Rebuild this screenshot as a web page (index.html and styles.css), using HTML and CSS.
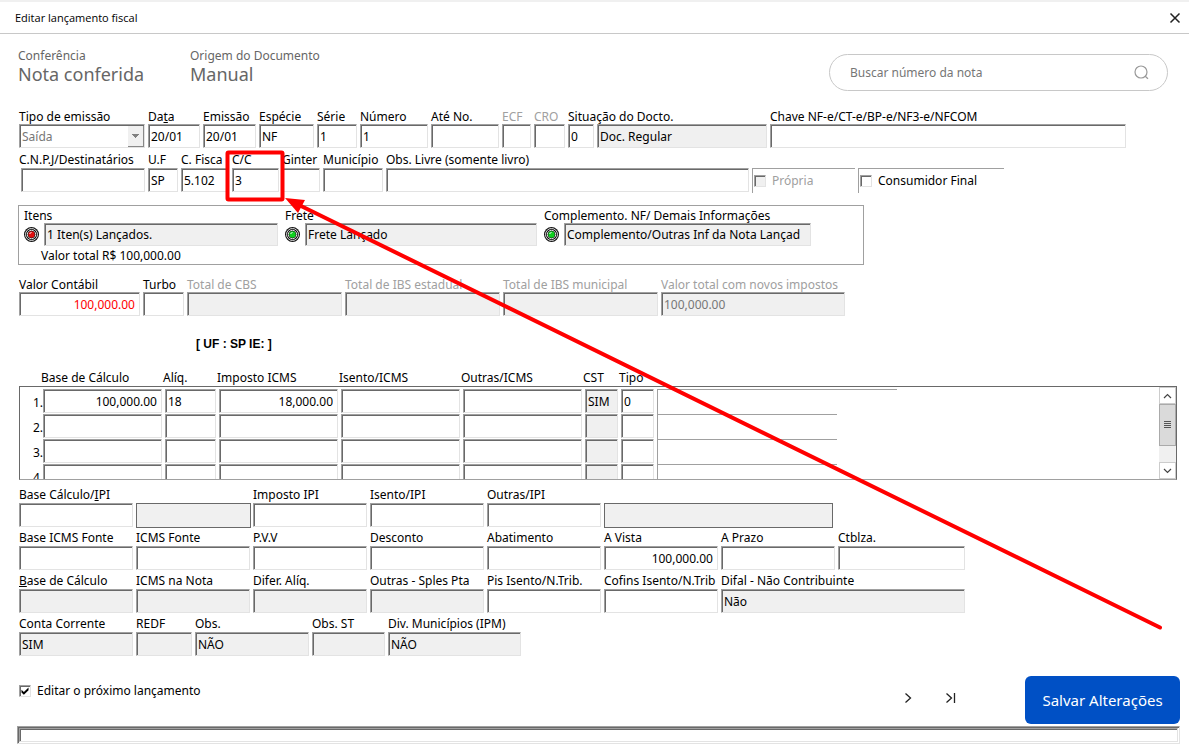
FILE: index.html
```html
<!DOCTYPE html>
<html lang="pt-BR">
<head>
  <meta charset="UTF-8">
  <meta name="viewport" content="width=device-width, initial-scale=1.0">
  <title>Editar lançamento fiscal</title>
  <link rel="stylesheet" href="styles.css">
</head>
<body>
  <header class="titlebar">
    <span class="titlebar-text">Editar lançamento fiscal</span>
    <button class="icon-button" aria-label="Fechar">
      <svg width="12" height="12" viewBox="0 0 12 12"><path d="M1.5 1.5l9 9M10.5 1.5l-9 9" fill="none" stroke="#222" stroke-width="1.5"/></svg>
    </button>
  </header>

  <main class="form">
    <section class="summary">
      <div class="summary-item conference">
        <div class="summary-label">Conferência</div>
        <div class="summary-value">Nota conferida</div>
      </div>
      <div class="summary-item">
        <div class="summary-label">Origem do Documento</div>
        <div class="summary-value">Manual</div>
      </div>
      <div class="search">
        <input type="text" placeholder="Buscar número da nota" aria-label="Buscar número da nota">
        <svg width="15" height="15" viewBox="0 0 15 15"><circle cx="7" cy="7" r="6" fill="none" stroke="#999" stroke-width="1.2"/><path d="M11.2 11.2l2.8 2.6" stroke="#999" stroke-width="1.2"/></svg>
      </div>
    </section>

    <section class="row row-document">
      <div class="field disabled">
        <label for="tipo" class="enabled-label">Tipo de emissão</label>
        <select id="tipo" disabled><option>Saída</option></select>
      </div>
      <div class="field"><label for="data">Da<u>t</u>a</label><input id="data" value="20/01"></div>
      <div class="field"><label for="emissao">Emissão</label><input id="emissao" value="20/01"></div>
      <div class="field"><label for="especie">Espécie</label><input id="especie" value="NF"></div>
      <div class="field"><label for="serie">Série</label><input id="serie" value="1"></div>
      <div class="field"><label for="numero">Número</label><input id="numero" value="1"></div>
      <div class="field"><label for="ate">Até No.</label><input id="ate"></div>
      <div class="field disabled"><label for="ecf">ECF</label><input id="ecf" disabled></div>
      <div class="field disabled"><label for="cro">CRO</label><input id="cro" disabled></div>
      <div class="field">
        <label for="situacao">Situação do Docto.</label>
        <div class="situation">
          <input id="situacao" value="0">
          <input class="readonly" value="Doc. Regular" aria-label="Descrição da situação" readonly>
        </div>
      </div>
      <div class="field"><label for="chave">Chave NF-e/CT-e/BP-e/NF3-e/NFCOM</label><input id="chave"></div>
    </section>

    <section class="row row-recipient">
      <div class="field"><label for="cnpj">C.N.P.J/Destinatários</label><input id="cnpj" class="inset"></div>
      <div class="field"><label for="uf">U.F</label><input id="uf" value="SP"></div>
      <div class="field"><label for="fiscal">C. Fisca</label><input id="fiscal" value="5.102"></div>
      <div class="field"><label for="cc">C/C</label><input id="cc" value="3"></div>
      <div class="field"><label for="ginter">Ginter</label><input id="ginter"></div>
      <div class="field"><label for="municipio">Município</label><input id="municipio"></div>
      <div class="field"><label for="obs-livre">Obs. Livre (somente livro)</label><input id="obs-livre"></div>
      <label class="check-panel disabled"><input type="checkbox" disabled> Própria</label>
      <label class="check-panel"><input type="checkbox"> Consumidor Final</label>
    </section>

    <section class="group">
      <div class="field">
        <label for="itens">Itens</label>
        <div class="led-field">
          <svg class="led led-red" viewBox="0 0 15 15"><circle class="led-rim" cx="7.5" cy="7.5" r="7.5"/><circle class="led-ring" cx="7.5" cy="7.5" r="6"/><circle class="led-ring" cx="7.5" cy="7.5" r="4.2"/><circle class="led-light" cx="7.5" cy="7.5" r="3.2"/><path d="M5.500 6.500l2-1" stroke="#fff"/></svg>
          <input id="itens" class="readonly" value="1 Iten(s) Lançados." readonly>
        </div>
      </div>
      <div class="field">
        <label for="frete">Frete</label>
        <div class="led-field">
          <svg class="led led-green" viewBox="0 0 15 15"><circle class="led-rim" cx="7.5" cy="7.5" r="7.5"/><circle class="led-ring" cx="7.5" cy="7.5" r="6"/><circle class="led-ring" cx="7.5" cy="7.5" r="4.2"/><circle class="led-light" cx="7.5" cy="7.5" r="3.2"/><path d="M5.500 6.500l2-1" stroke="#fff"/></svg>
          <input id="frete" class="readonly" value="Frete Lançado" readonly>
        </div>
      </div>
      <div class="field">
        <label for="complemento">Complemento. NF/ Demais Informações</label>
        <div class="led-field">
          <svg class="led led-green" viewBox="0 0 15 15"><circle class="led-rim" cx="7.5" cy="7.5" r="7.5"/><circle class="led-ring" cx="7.5" cy="7.5" r="6"/><circle class="led-ring" cx="7.5" cy="7.5" r="4.2"/><circle class="led-light" cx="7.5" cy="7.5" r="3.2"/><path d="M5.500 6.500l2-1" stroke="#fff"/></svg>
          <input id="complemento" class="readonly" value="Complemento/Outras Inf da Nota Lançad" readonly>
        </div>
      </div>
      <div class="group-total">Valor total R$ 100,000.00</div>
    </section>

    <section class="row row-totals">
      <div class="field"><label for="contabil">Valor Contábil</label><input id="contabil" class="number negative" value="100,000.00"></div>
      <div class="field"><label for="turbo">Turbo</label><input id="turbo"></div>
      <div class="field disabled"><label for="cbs">Total de CBS</label><input id="cbs" class="readonly" disabled></div>
      <div class="field disabled"><label for="ibs-est">Total de IBS estadual</label><input id="ibs-est" class="readonly" disabled></div>
      <div class="field disabled"><label for="ibs-mun">Total de IBS municipal</label><input id="ibs-mun" class="readonly" disabled></div>
      <div class="field disabled"><label for="novos">Valor total com novos impostos</label><input id="novos" class="readonly" value="100,000.00" disabled></div>
    </section>

    <div class="party">[ UF : SP IE: ]</div>

    <section class="taxes">
      <table class="tax-table">
        <thead>
          <tr><th></th><th>Base de Cálculo</th><th>Alíq.</th><th>Imposto ICMS</th><th>Isento/ICMS</th><th>Outras/ICMS</th><th>CST</th><th>Tipo</th></tr>
        </thead>
        <tbody>
          <tr>
            <td class="line">1.</td>
            <td><input class="number" value="100,000.00" aria-label="Base de Cálculo 1"></td>
            <td><input value="18" aria-label="Alíquota 1"></td>
            <td><input class="number" value="18,000.00" aria-label="Imposto ICMS 1"></td>
            <td><input aria-label="Isento/ICMS 1"></td>
            <td><input aria-label="Outras/ICMS 1"></td>
            <td><input class="readonly" value="SIM" aria-label="CST 1" readonly></td>
            <td><input value="0" aria-label="Tipo 1"></td>
            <td class="note note-wide"></td>
          </tr>
          <tr>
            <td class="line">2.</td>
            <td><input aria-label="Base de Cálculo 2"></td>
            <td><input aria-label="Alíquota 2"></td>
            <td><input aria-label="Imposto ICMS 2"></td>
            <td><input aria-label="Isento/ICMS 2"></td>
            <td><input aria-label="Outras/ICMS 2"></td>
            <td><input class="readonly" aria-label="CST 2" readonly></td>
            <td><input aria-label="Tipo 2"></td>
            <td class="note"></td>
          </tr>
          <tr>
            <td class="line">3.</td>
            <td><input aria-label="Base de Cálculo 3"></td>
            <td><input aria-label="Alíquota 3"></td>
            <td><input aria-label="Imposto ICMS 3"></td>
            <td><input aria-label="Isento/ICMS 3"></td>
            <td><input aria-label="Outras/ICMS 3"></td>
            <td><input class="readonly" aria-label="CST 3" readonly></td>
            <td><input aria-label="Tipo 3"></td>
            <td class="note"></td>
          </tr>
          <tr>
            <td class="line">4.</td>
            <td><input aria-label="Base de Cálculo 4"></td>
            <td><input aria-label="Alíquota 4"></td>
            <td><input aria-label="Imposto ICMS 4"></td>
            <td><input aria-label="Isento/ICMS 4"></td>
            <td><input aria-label="Outras/ICMS 4"></td>
            <td><input class="readonly" aria-label="CST 4" readonly></td>
            <td><input aria-label="Tipo 4"></td>
            <td class="note"></td>
          </tr>
        </tbody>
      </table>
      <div class="scrollbar">
        <button class="scroll-arrow" aria-label="Subir"><svg width="9" height="6" viewBox="0 0 9 6"><path d="M1 5l3.500-3.500L8 5" fill="none" stroke="#444" stroke-width="1.200"/></svg></button>
        <div class="scroll-track"><div class="scroll-thumb"><svg width="7" height="8" viewBox="0 0 7 8"><path d="M0 .5h7M0 2.500h7M0 4.500h7M0 6.500h7" stroke="#555"/></svg></div></div>
        <button class="scroll-arrow" aria-label="Descer"><svg width="9" height="6" viewBox="0 0 9 6"><path d="M1 1l3.500 3.500L8 1" fill="none" stroke="#444" stroke-width="1.200"/></svg></button>
      </div>
    </section>

    <section class="values">
      <div class="field"><label for="base-ipi">Base Cálculo/<u>I</u>PI</label><input id="base-ipi"></div>
      <div class="field"><div class="blank-box"></div></div>
      <div class="field"><label for="imp-ipi">Imposto IPI</label><input id="imp-ipi"></div>
      <div class="field"><label for="isento-ipi">Isento/IPI</label><input id="isento-ipi"></div>
      <div class="field"><label for="outras-ipi">Outras/IPI</label><input id="outras-ipi"></div>
      <div class="field span-two"><div class="blank-box"></div></div>
      <div></div>

      <div class="field"><label for="base-fonte">Base ICMS Fonte</label><input id="base-fonte"></div>
      <div class="field"><label for="icms-fonte">ICMS Fonte</label><input id="icms-fonte"></div>
      <div class="field"><label for="pvv">P.V.V</label><input id="pvv"></div>
      <div class="field"><label for="desconto">Desconto</label><input id="desconto"></div>
      <div class="field"><label for="abatimento">Abatimento</label><input id="abatimento"></div>
      <div class="field"><label for="vista">A Vista</label><input id="vista" class="number" value="100,000.00"></div>
      <div class="field"><label for="prazo">A Prazo</label><input id="prazo"></div>
      <div class="field"><label for="ctblza">Ctblza.</label><input id="ctblza"></div>

      <div class="field"><label for="base-calc"><u>B</u>ase de Cálculo</label><input id="base-calc" class="readonly" readonly></div>
      <div class="field"><label for="icms-nota">ICMS na Nota</label><input id="icms-nota" class="readonly" readonly></div>
      <div class="field"><label for="difer">Difer. Alíq.</label><input id="difer" class="readonly" readonly></div>
      <div class="field"><label for="sples">Outras - Sples Pta</label><input id="sples" class="readonly" readonly></div>
      <div class="field"><label for="pis">Pis Isento/N.Trib.</label><input id="pis"></div>
      <div class="field"><label for="cofins">Cofins Isento/N.Trib</label><input id="cofins"></div>
      <div class="field span-two"><label for="difal">Difal - Não Contribuinte</label><input id="difal" class="readonly" value="Não" readonly></div>
    </section>

    <section class="row row-flags">
      <div class="field"><label for="conta">Conta Corrente</label><input id="conta" class="readonly" value="SIM" readonly></div>
      <div class="field"><label for="redf">REDF</label><input id="redf" class="readonly" readonly></div>
      <div class="field"><label for="obs">Obs.</label><input id="obs" class="readonly" value="NÃO" readonly></div>
      <div class="field"><label for="obs-st">Obs. ST</label><input id="obs-st" class="readonly" readonly></div>
      <div class="field"><label for="ipm">Div. Municípios (IPM)</label><input id="ipm" class="readonly" value="NÃO" readonly></div>
    </section>

    <footer class="actions">
      <label class="next-check"><input type="checkbox" checked> Editar o próximo lançamento</label>
      <div class="pager">
        <button class="icon-button" aria-label="Próximo"><svg width="8" height="12" viewBox="0 0 8 12"><path d="M1.500 1.500L6.500 6l-5 4.500" fill="none" stroke="#222" stroke-width="1.300"/></svg></button>
        <button class="icon-button" aria-label="Último"><svg width="11" height="12" viewBox="0 0 11 12"><path d="M1.500 1.500L6.500 6l-5 4.500M9.500 1v10" fill="none" stroke="#222" stroke-width="1.300"/></svg></button>
      </div>
      <button class="save">Salvar Alterações</button>
    </footer>
    <div class="status-bar"><div class="status-inner"></div></div>
  </main>

  <!-- callout pointing at the C/C field -->
  <svg class="callout" width="1189" height="756" viewBox="0 0 1189 756">
    <rect x="227.500" y="152.500" width="55" height="47" rx="1" fill="none" stroke="#f00" stroke-width="4"/>
    <path d="M298 204.500L1160 627.500" stroke="#f00" stroke-width="4" stroke-linecap="round"/>
    <path d="M285 198l20 2-7 13z" fill="#f00"/>
  </svg>
</body>
</html>
```

FILE: styles.css
```css
* {
  box-sizing: border-box;
}

body {
  margin: 0;
  background: #fff;
  color: #000;
  font-family: "Noto Sans", "Open Sans", sans-serif;
  font-size: 12px;
  line-height: 16px;
}

button,
input,
select {
  font: inherit;
  color: inherit;
  border-radius: 0;
}

.titlebar {
  display: flex;
  align-items: center;
  justify-content: space-between;
  height: 34px;
  padding: 0 8px 0 15px;
  border-top: 2px solid #f0f0f0;
  border-bottom: 1px solid #c8c8c8;
}

.titlebar-text {
  font-family: "Open Sans", sans-serif;
  font-size: 11px;
}

.icon-button {
  display: flex;
  padding: 0;
  border: none;
  background: none;
}

.form {
  padding: 14px 9px 0 19px;
}

.summary {
  display: flex;
  height: 60px;
  margin-left: -1px;
  color: #666;
}

.conference {
  width: 172px;
}

.summary-value {
  font-size: 18px;
  line-height: 20px;
}

.search {
  display: flex;
  align-items: center;
  width: 339px;
  height: 37px;
  margin: 6px 12px 0 auto;
  padding: 0 18px 0 20px;
  border: 1px solid #c8c8c8;
  border-radius: 19px;
}

.search input {
  flex: 1;
  padding: 0;
  border: none;
  outline: none;
}

.search input::placeholder {
  color: #767676;
}

/* field rows */
.row {
  display: grid;
  gap: 3px;
}

.row-document {
  grid-template-columns: 126px 52px 53px 55px 40px 68px 68px 29px 31px 199px 1fr;
  padding-right: 54px;
}

.row-recipient {
  grid-template-columns: 126px 30px 48px 47px 38px 60px 1fr 103px 146px;
  margin-top: 4px;
  padding-right: 176px;
}

.row-totals {
  grid-template-columns: 121px 41px 155px 155px 155px 184px;
  margin-top: 11px;
}

.row-flags {
  grid-template-columns: 114px 56px 114px 73px 133px;
  margin-top: 3px;
}

.row-document label,
.row-totals label {
  line-height: 18px;
}

.values {
  display: grid;
  grid-template-columns: repeat(7, 114px) 127px;
  gap: 3px;
  margin-top: 7px;
}

.span-two {
  grid-column: span 2;
}

.field {
  display: flex;
  flex-direction: column;
  min-width: 0;
}

.field label {
  height: 16px;
  white-space: nowrap;
}

.field input,
.field select,
.tax-table input {
  width: 100%;
  height: 24px;
  min-width: 0;
  padding: 0 2px;
  border: 1px solid;
  border-color: #a0a0a0 #e3e3e3 #e3e3e3 #a0a0a0;
  box-shadow: inset 1px 1px #696969;
  background: #fff;
  outline: none;
}

.field .inset {
  align-self: flex-end;
  width: 124px;
}

.field .readonly,
.tax-table .readonly {
  background: #f0f0f0;
}

.field .readonly:disabled {
  color: #777;
}

.field .number,
.tax-table .number {
  padding-right: 4px;
  text-align: right;
}

.field .negative {
  color: #f00;
}

.field.disabled,
.check-panel.disabled {
  color: #a0a0a0;
}

.field .enabled-label {
  color: #000;
}

.field select {
  appearance: none;
  padding-top: 1px;
  background: linear-gradient(#808080, #808080) right 5px top 9px / 7px 1px no-repeat,
    linear-gradient(#808080, #808080) right 6px top 10px / 5px 1px no-repeat,
    linear-gradient(#808080, #808080) right 7px top 11px / 3px 1px no-repeat,
    linear-gradient(#808080, #808080) right 8px top 12px / 1px 1px no-repeat,
    linear-gradient(#888, #888) right 0 top 1px / 1px 21px no-repeat,
    linear-gradient(#888, #888) right 0 bottom 0 / 16px 1px no-repeat,
    linear-gradient(#f0f0f0, #f0f0f0) right 1px top 1px / 15px 20px no-repeat,
    #fff;
  color: #777;
  opacity: 1;
}

.situation {
  display: grid;
  grid-template-columns: 26px 1fr;
  gap: 3px;
}

.check-panel {
  display: flex;
  align-items: center;
  gap: 6px;
  height: 25px;
  margin-top: 16px;
  padding-left: 1px;
  border-top: 1px solid #a0a0a0;
  border-left: 1px solid #a0a0a0;
  white-space: nowrap;
}

input[type="checkbox"] {
  appearance: none;
  flex: none;
  width: 12px;
  height: 12px;
  margin: 0;
  border: 1px solid;
  border-color: #a0a0a0 #e3e3e3 #e3e3e3 #a0a0a0;
  box-shadow: inset 1px 1px #696969;
}

input[type="checkbox"]:disabled {
  background: #f0f0f0;
}

input[type="checkbox"]:checked {
  display: grid;
  place-items: center;
}

input[type="checkbox"]:checked::before {
  content: "";
  width: 8px;
  height: 8px;
  background: #000;
  clip-path: polygon(6% 35%, 36% 62%, 94% 6%, 94% 42%, 36% 98%, 6% 70%);
}

/* items / freight / extra information */
.group {
  display: grid;
  grid-template-columns: 254px 252px 267px;
  column-gap: 7px;
  width: 846px;
  height: 60px;
  margin: 12px 0 0 -1px;
  padding: 1px 5px 0;
  border: 1px solid #a0a0a0;
}

.group label {
  line-height: 18px;
}

.led-field {
  display: flex;
  align-items: center;
  gap: 5px;
}

.group .readonly {
  height: 23px;
}

.led {
  flex: none;
  width: 15px;
  height: 15px;
}

.led-rim {
  fill: #111;
}

.led-ring {
  fill: none;
  stroke: #ddd;
  stroke-width: 1;
}

.led-red .led-light {
  fill: #e01010;
}

.led-green .led-light {
  fill: #10d020;
}

.group-total {
  grid-column: 1 / -1;
  padding: 1px 0 0 17px;
}

.party {
  margin: 20px 0 0 177px;
  font-family: "Liberation Sans", Arial, sans-serif;
  font-weight: bold;
}

/* ICMS lines */
.taxes {
  display: flex;
  margin: 17px 3px 0 0;
}

.tax-table {
  display: block;
  flex: 1;
  min-width: 0;
}

.tax-table tr {
  display: grid;
  grid-template-columns: 19px 119px 51px 119px 119px 119px 33px 33px 1fr;
  column-gap: 3px;
}

.tax-table thead,
.tax-table tbody {
  display: block;
}

.tax-table tbody {
  height: 94px;
  padding-top: 2px;
  overflow: hidden;
  border: 1px solid #696969;
  border-right: none;
  border-bottom-color: #a0a0a0;
}

.tax-table tbody tr {
  grid-template-columns: 23px 119px 51px 119px 119px 119px 33px 33px 1fr;
  height: 25px;
}

/* the line number sits flush against the first box */
.tax-table tbody .line + td {
  margin-left: 0;
}

.tax-table tbody .line {
  margin-right: 0;
  padding-top: 5px;
  text-align: right;
}

.tax-table tbody tr {
  column-gap: 3px;
  grid-template-columns: 20px 119px 51px 119px 119px 119px 33px 33px 1fr;
}

.tax-table th,
.tax-table td {
  display: block;
  padding: 0;
}

.tax-table th {
  height: 17px;
  font-weight: normal;
  line-height: 18px;
  text-align: left;
  white-space: nowrap;
}

.tax-table tbody .line {
  margin-right: -3px;
  padding-top: 6px;
}

.note {
  width: 180px;
  border-top: 1px solid #a0a0a0;
  border-left: 1px solid #a0a0a0;
}

.note-wide {
  width: 240px;
}

.scrollbar {
  display: flex;
  flex-direction: column;
  width: 18px;
  height: 94px;
  margin-top: 17px;
  border: 1px solid #696969;
  border-left: none;
  border-bottom-color: #a0a0a0;
  background: #f0f0f0;
}

.scroll-arrow {
  display: flex;
  align-items: center;
  justify-content: center;
  height: 17px;
  padding: 0;
  border: 1px solid #ccc;
  background: #fff;
}

.scroll-track {
  flex: 1;
}

.scroll-thumb {
  display: flex;
  align-items: center;
  justify-content: center;
  height: 42px;
  border: 1px solid #aaa;
  background: #dadada;
}

.blank-box {
  height: 25px;
  margin: 16px -1px -1px 0;
  border: 1px solid #696969;
  background: #f0f0f0;
}

.span-two .blank-box {
  margin-right: 2px;
}

/* footer */
.actions {
  display: flex;
  align-items: flex-start;
  margin-top: 20px;
}

.next-check {
  display: flex;
  align-items: center;
  gap: 6px;
  margin-top: 7px;
}

.pager {
  display: flex;
  gap: 33px;
  margin: 16px 69px 0 auto;
}

.save {
  width: 155px;
  height: 48px;
  padding: 0;
  border: none;
  border-radius: 6px;
  background: #0050c5;
  color: #fff;
  font-size: 15px;
}

.status-bar {
  height: 18px;
  margin: 2px 0 0 -2px;
  border: 1px solid;
  border-color: #a0a0a0 #e3e3e3 #e3e3e3 #a0a0a0;
  box-shadow: inset 1px 1px #696969;
  padding: 1px;
}

.status-inner {
  height: 14px;
  border: 1px solid;
  border-color: #a0a0a0 #e3e3e3 #e3e3e3 #a0a0a0;
  box-shadow: inset 1px 1px #696969;
}

.callout {
  position: absolute;
  top: 0;
  left: 0;
  pointer-events: none;
}
```
